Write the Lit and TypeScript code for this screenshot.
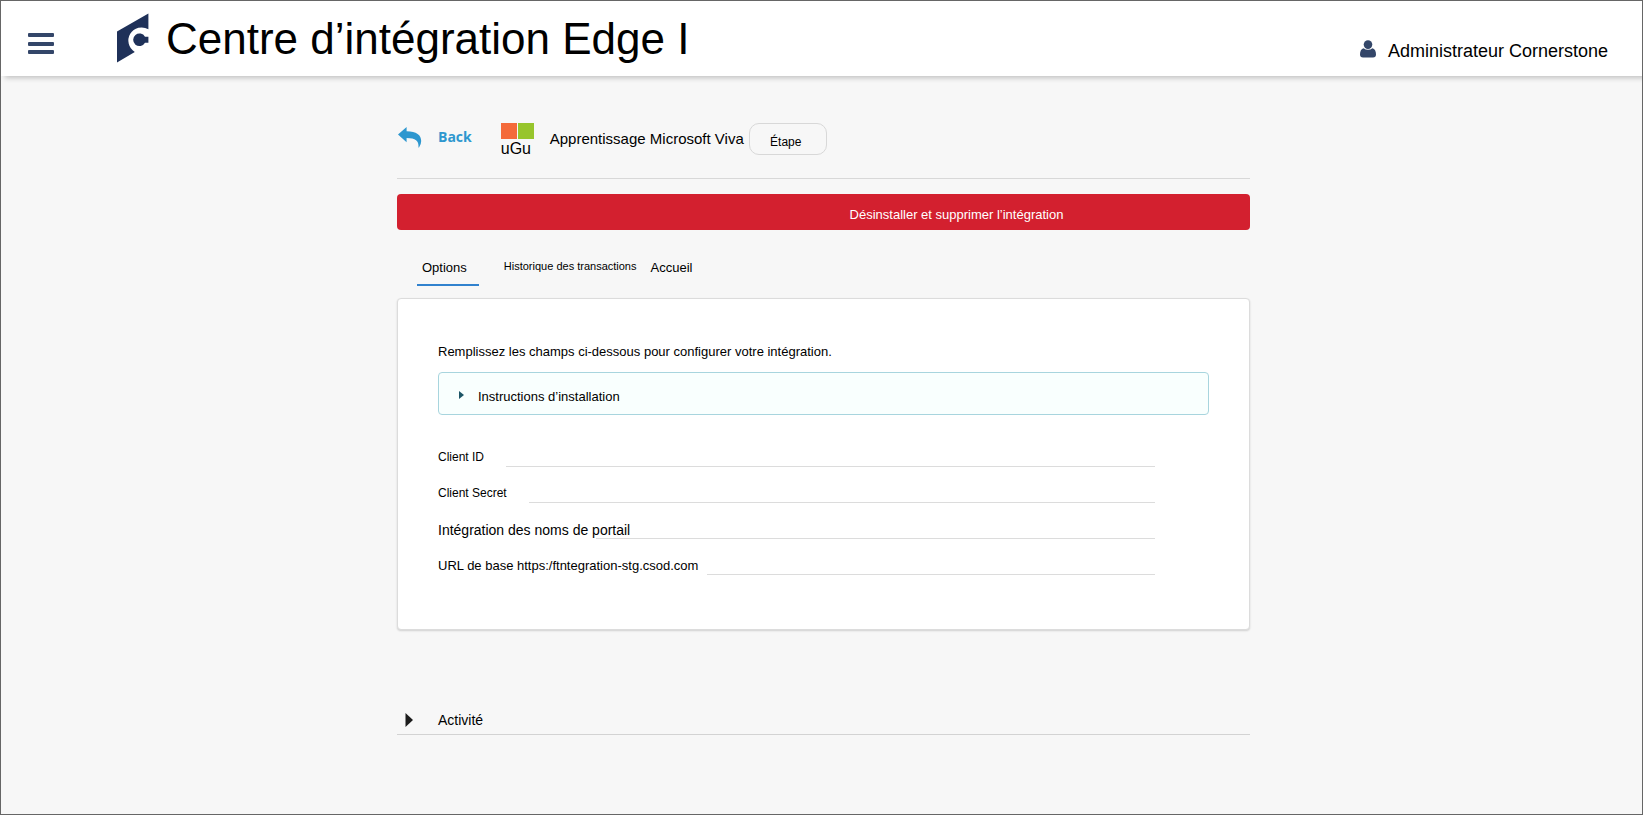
import { LitElement, html, css } from "lit";
import { customElement, state } from "lit/decorators.js";

interface Field {
  id: string;
  label: string;
  size: string;
}

const FIELDS: Field[] = [
  { id: "client-id", label: "Client ID", size: "small" },
  { id: "client-secret", label: "Client Secret", size: "small" },
  { id: "portal-name", label: "Intégration des noms de portail", size: "large" },
  { id: "base-url", label: "URL de base https:/ftntegration-stg.csod.com", size: "medium" },
];

@customElement("app-header")
export class AppHeader extends LitElement {
  static styles = css`
    :host {
      display: block;
    }
    .bar {
      display: flex;
      align-items: center;
      height: 75px;
      padding: 0 34px 0 26px;
      box-sizing: border-box;
      background: #fff;
    }
    .menu {
      padding: 11px 0 0;
      border: 0;
      background: none;
      cursor: pointer;
    }
    svg {
      display: block;
    }
    .logo {
      margin: 0 0 2px 62px;
    }
    h1 {
      margin: 0 0 0 17px;
      font-size: 44px;
      line-height: 50px;
      font-weight: 400;
      white-space: nowrap;
    }
    .user {
      display: flex;
      align-items: center;
      gap: 12px;
      margin-left: auto;
      padding-top: 24px;
      color: #000;
      font-size: 18px;
      line-height: 20px;
      text-decoration: none;
      white-space: nowrap;
    }
    .user svg {
      margin-bottom: 4px;
    }
  `;

  render() {
    return html`
      <header class="bar">
        <button class="menu" aria-label="Menu">
          <svg width="28" height="24" viewBox="0 0 28 24" fill="#334669">
            <rect x="1" y="1" width="26" height="4" rx="1" />
            <rect x="1" y="10" width="26" height="4" rx="1" />
            <rect x="1" y="18" width="26" height="4" rx="1" />
          </svg>
        </button>
        <svg class="logo" width="32" height="50" viewBox="0 0 32 50">
          <path d="M0 18.500 31.400 .500V16.300A13.200 13.200 0 1 0 17.800 39L0 49.500Z" fill="#1f3159" />
          <path d="M28 23.800A6.300 6.300 0 1 0 28 29.800H31.400V23.800Z" fill="#1f3159" />
        </svg>
        <h1>Centre d’intégration Edge I</h1>
        <a class="user" href="#profil">
          <svg width="16" height="18" viewBox="0 0 16 18" fill="#334669">
            <circle cx="8" cy="4.600" r="4.300" />
            <path d="M3.600 8.200Q0 9 0 14.600Q0 17.600 3 17.600H13Q16 17.600 16 14.600Q16 9 12.400 8.200Q10.600 9.800 8 9.800T3.600 8.200Z" />
          </svg>
          Administrateur Cornerstone
        </a>
      </header>
    `;
  }
}

@customElement("config-form")
export class ConfigForm extends LitElement {
  @state() private open = false;

  static styles = css`
    :host {
      display: block;
    }
    .card {
      padding: 44px 40px 54px;
      border: 1px solid #dcdcdc;
      border-radius: 4px;
      background: #fff;
      box-shadow: 0 1px 2px rgba(0, 0, 0, 0.16);
    }
    p {
      margin: 0 0 11px;
      font-size: 13px;
      line-height: 18px;
    }
    .disclosure {
      display: flex;
      align-items: center;
      gap: 14px;
      width: 100%;
      height: 43px;
      padding: 6px 20px 0;
      border: 1px solid #a8d5de;
      border-radius: 4px;
      background: #f9fffe;
      color: #000;
      font: inherit;
      font-size: 13px;
      text-align: left;
      cursor: pointer;
    }
    .disclosure svg {
      display: block;
      margin-bottom: 3px;
    }
    .fields {
      display: grid;
      margin: 16px 54px 0 0;
    }
    .field {
      display: flex;
      align-items: flex-end;
      height: 36px;
    }
    label {
      position: relative;
      z-index: 1;
      line-height: 18px;
      white-space: nowrap;
    }
    .small label {
      padding-bottom: 1px;
      font-size: 12px;
    }
    .medium label {
      font-size: 13px;
    }
    .large label {
      font-size: 14px;
    }
    input {
      flex: 1;
      min-width: 0;
      height: 26px;
      padding: 0 8px;
      border: 0;
      border-bottom: 1px solid #dcdcdc;
      box-sizing: border-box;
      background: none;
      font: inherit;
      font-size: 13px;
      outline: none;
    }
    .small input {
      margin-left: 22px;
    }
    .medium input {
      margin-left: 9px;
    }
    .large input {
      margin-left: -34px;
    }
  `;

  render() {
    return html`
      <section class="card">
        <p>Remplissez les champs ci-dessous pour configurer votre intégration.</p>
        <button
          class="disclosure"
          aria-expanded=${this.open ? "true" : "false"}
          @click=${() => (this.open = !this.open)}
        >
          <svg width="5" height="8" viewBox="0 0 5 8"><path d="M0 0 5 4 0 8Z" fill="#1d5566" /></svg>
          Instructions d’installation
        </button>
        <form class="fields">
          ${FIELDS.map(
            (f) => html`
              <div class="field ${f.size}">
                <label for=${f.id}>${f.label}</label>
                <input id=${f.id} type="text" />
              </div>
            `
          )}
        </form>
      </section>
    `;
  }
}

@customElement("app-root")
export class AppRoot extends LitElement {
  static styles = css`
    :host {
      display: block;
      font-family: "Liberation Sans", Arial, sans-serif;
      color: #000;
    }
    .page {
      min-height: 100vh;
      box-sizing: border-box;
      border: 1px solid #666;
      background: #f7f7f7;
      padding-bottom: 40px;
    }
    .top {
      box-shadow: 4px 2px 5px rgba(0, 0, 0, 0.22);
      clip-path: inset(0 0 -12px 0);
    }
    main {
      width: 853px;
      max-width: 100%;
      margin: 0 auto;
      padding-left: 4px;
    }
    .heading {
      display: flex;
      align-items: center;
      height: 103px;
      padding-top: 24px;
      box-sizing: border-box;
      border-bottom: 1px solid #d8d8d8;
    }
    .back {
      display: flex;
      align-items: center;
      gap: 16px;
      padding: 0 0 4px 1px;
      color: #2e97cf;
      font-family: "Open Sans", sans-serif;
      font-size: 14px;
      line-height: 20px;
      font-weight: 700;
      text-decoration: none;
    }
    svg {
      display: block;
    }
    .brand {
      width: 33px;
      margin-left: 29px;
      padding-top: 3px;
      font-size: 16px;
      line-height: 19px;
    }
    .tiles {
      display: grid;
      grid-template-columns: 1fr 1fr;
      gap: 1px;
    }
    .tile {
      height: 16px;
      background: #f46a3a;
    }
    .green {
      background: #97c52c;
    }
    h2 {
      margin: 0 0 0 16px;
      font-size: 15px;
      line-height: 18px;
      font-weight: 400;
    }
    .step {
      width: 78px;
      height: 32px;
      margin-left: 5px;
      padding: 6px 4px 0 0;
      border: 1px solid #d8d8d8;
      border-radius: 10px;
      background: #f7f7f7;
      color: #000;
      font: inherit;
      font-size: 12px;
    }
    .remove {
      display: block;
      width: 100%;
      height: 36px;
      margin-top: 15px;
      padding: 4px 0 0 266px;
      border: 0;
      border-radius: 4px;
      background: #d3202f;
      color: #fff;
      font: inherit;
      font-size: 13px;
    }
    .tabs {
      display: flex;
      margin-top: 26px;
      padding-left: 20px;
    }
    .tab {
      height: 30px;
      padding: 0;
      border: 0;
      background: none;
      color: #000;
      font: inherit;
      font-size: 13px;
      line-height: 24px;
      display: flex;
    }
    .active {
      padding: 0 12px 0 5px;
      border-bottom: 2px solid #3182ce;
    }
    .history {
      margin: 0 14px 0 25px;
      font-size: 11px;
      line-height: 20px;
    }
    config-form {
      margin-top: 12px;
    }
    .activity {
      display: flex;
      align-items: center;
      gap: 25px;
      width: 100%;
      height: 28px;
      margin-top: 77px;
      padding: 0 0 2px 8px;
      border: 0;
      border-bottom: 1px solid #d3d3d3;
      background: none;
      color: #000;
      font: inherit;
      font-size: 14px;
    }
  `;

  render() {
    return html`
      <div class="page">
        <app-header class="top"></app-header>
        <main>
          <div class="heading">
            <a class="back" href="#retour">
              <svg width="24" height="21" viewBox="0 0 24 21">
                <path d="M0 7.500 8.600 0V4.200C18.500 4.200 23.200 8 23.200 14Q23.200 17.600 21 20.600Q20.600 20.800 20.500 20.200C20.900 13.600 17.600 11.200 8.600 11V15.300Z" fill="#2e97cf" />
              </svg>
              Back
            </a>
            <div class="brand">
              <div class="tiles">
                <div class="tile"></div>
                <div class="tile green"></div>
              </div>
              uGu
            </div>
            <h2>Apprentissage Microsoft Viva</h2>
            <button class="step">Étape</button>
          </div>
          <button class="remove">Désinstaller et supprimer l’intégration</button>
          <nav class="tabs">
            <button class="tab active">Options</button>
            <button class="tab history">Historique des transactions</button>
            <button class="tab">Accueil</button>
          </nav>
          <config-form></config-form>
          <button class="activity">
            <svg width="8" height="14" viewBox="0 0 8 14"><path d="M.5 0 8 7 .5 14Z" fill="#1c1c1c" /></svg>
            Activité
          </button>
        </main>
      </div>
    `;
  }
}
